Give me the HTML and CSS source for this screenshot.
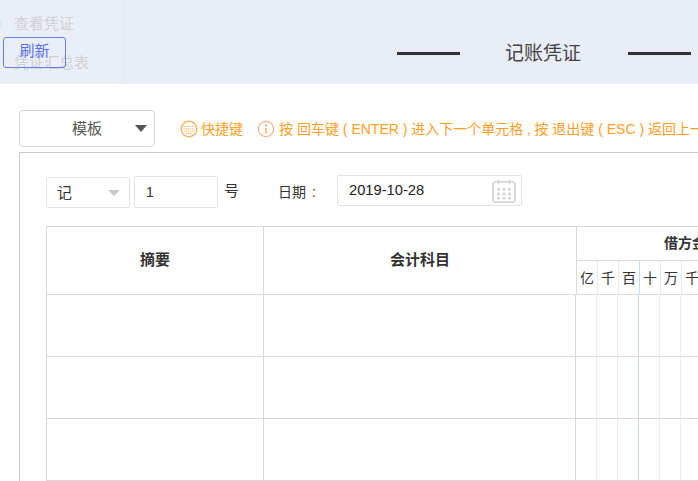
FILE: index.html
```html
<!DOCTYPE html>
<html lang="zh">
<head>
<meta charset="utf-8">
<title>记账凭证</title>
<link rel="stylesheet" href="styles.css">
</head>
<body>
<div class="page">
  <header class="top">
    <nav class="side">
      <div class="side-item">查看凭证</div>
      <div class="side-item second">凭证汇总表</div>
      <span class="dot"></span>
    </nav>
    <button class="refresh">刷新</button>
    <div class="title">
      <span class="rule"></span>
      <span class="title-text">记账凭证</span>
      <span class="rule"></span>
    </div>
  </header>

  <div class="toolbar">
    <div class="tpl"><span class="tpl-text">模板</span><span class="caret"></span></div>
    <div class="shortcut">
      <svg class="ico" width="18" height="18" viewBox="0 0 18 18"><circle cx="9" cy="9" r="7.800" fill="#fff" stroke="#fbb45a" stroke-width="1.400"/><g fill="none" stroke="#fbc27a"><path d="M3.500 6.500h11M3.500 8.800h11M3.500 11h11" stroke-dasharray="1.500 .5"/><path d="M6 13.300h6"/></g></svg>
      <span>快捷键</span>
    </div>
    <div class="hint">
      <svg class="ico" width="18" height="18" viewBox="0 0 18 18"><circle cx="9" cy="9" r="7.700" fill="none" stroke="#fcae8e" stroke-width="1.200"/><path d="M9 8v5.500" stroke="#f9a03f" stroke-width="1.300"/><circle cx="9" cy="5.500" r="1" fill="#f9a03f"/></svg>
      <span class="hint-text">按 回车键<span class="p">(</span>ENTER<span class="p">)</span>进入下一个单元格<span class="p comma">,</span>按 退出键<span class="p">(</span>ESC<span class="p">)</span>返回上一个单元格</span>
    </div>
  </div>

  <section class="panel">
    <div class="form">
      <div class="kind"><span>记</span><span class="caret light"></span></div>
      <div class="num">1</div>
      <span class="hao">号</span>
      <span class="date-label">日期<span class="p colon">:</span></span>
      <div class="date">
        <span class="date-val">2019-10-28</span>
        <svg class="cal" width="26" height="26" viewBox="0 0 26 26"><rect x="2" y="4" width="22" height="20" rx="3" fill="none" stroke="#d9d9d9" stroke-width="2"/><path d="M7.500 1.500v5M18.500 1.500v5" stroke="#d9d9d9" stroke-width="2"/><g fill="#d9d9d9"><rect x="6" y="10" width="3" height="3"/><rect x="11.500" y="10" width="3" height="3"/><rect x="17" y="10" width="3" height="3"/><rect x="6" y="14.500" width="3" height="3"/><rect x="11.500" y="14.500" width="3" height="3"/><rect x="17" y="14.500" width="3" height="3"/><rect x="6" y="19" width="3" height="2.500"/><rect x="11.500" y="19" width="3" height="2.500"/><rect x="17" y="19" width="3" height="2.500"/></g></svg>
      </div>
    </div>

    <table class="grid head">
      <colgroup>
        <col class="c-sum"><col class="c-acc-h">
        <col class="c-d"><col class="c-d"><col class="c-d"><col class="c-d"><col class="c-d"><col class="c-d"><col class="c-d"><col class="c-d"><col class="c-d"><col class="c-d"><col class="c-d">
      </colgroup>
      <thead>
        <tr class="h1">
          <th rowspan="2">摘要</th>
          <th rowspan="2">会计科目</th>
          <th colspan="11" class="debit">借方金额</th>
        </tr>
        <tr class="h2">
          <td>亿</td><td>千</td><td class="blue">百</td><td>十</td><td>万</td><td>千</td><td class="blue">百</td><td>十</td><td>元</td><td>角</td><td>分</td>
        </tr>
      </thead>
    </table>
    <table class="grid body">
      <colgroup>
        <col class="c-sum"><col class="c-acc">
        <col class="c-d"><col class="c-d"><col class="c-d"><col class="c-d"><col class="c-d"><col class="c-d">
      </colgroup>
      <tbody>
        <tr><td></td><td></td><td class="d"></td><td class="d"></td><td class="d blue"></td><td class="d"></td><td class="d"></td><td class="d"></td></tr>
        <tr><td></td><td></td><td class="d"></td><td class="d"></td><td class="d blue"></td><td class="d"></td><td class="d"></td><td class="d"></td></tr>
        <tr><td></td><td></td><td class="d"></td><td class="d"></td><td class="d blue"></td><td class="d"></td><td class="d"></td><td class="d"></td></tr>
      </tbody>
    </table>
  </section>
</div>
</body>
</html>
```

FILE: styles.css
```css
* { box-sizing: border-box; }
html, body { margin: 0; padding: 0; height: 100%; overflow: hidden; background: #fff; }
body { font-family: "Liberation Sans", "Noto Sans CJK SC", sans-serif; color: #333; line-height: 18px; }
.page { width: 698px; height: 481px; overflow: hidden; position: relative; }

.top { height: 84px; background: #e9edf7; display: flex; position: relative; }
.side { width: 124px; flex: none; position: relative; overflow: hidden; background: #e9eef7; border-right: 1px solid #e5e9f3; padding-left: 14px; padding-top: 15px; color: #cfd1d6; font-size: 15px; }
.side-item { white-space: nowrap; position: relative; }
.side-item.second { margin-top: 21px; }
.side::before, .side::after { content: ""; position: absolute; left: 0; right: 0; border-top: 1px dashed #e6eaf3; }
.side::before { top: 4px; }
.side::after { top: 43px; }
.dot { position: absolute; left: -4px; top: 21px; width: 6px; height: 6px; border: 1px solid #d8dbe2; border-radius: 50%; }
.refresh { position: absolute; left: 3px; top: 37px; width: 63px; height: 31px; padding: 0 0 3px; background: transparent; border: 1px solid #6580e0; border-radius: 3px; color: #5a6ef0; font: 15px/18px "Liberation Sans", "Noto Sans CJK SC", sans-serif; }
.title { display: flex; align-items: center; padding-left: 273px; height: 84px; padding-top: 22px; flex: none; }
.rule { width: 63px; height: 3px; background: #333; flex: none; }
.title-text { width: 168px; padding: 2px 2px 0 0; text-align: center; font-size: 19px; color: #444; }

.toolbar { display: flex; align-items: center; height: 37px; margin: 26px 0 5px 19px; white-space: nowrap; font-size: 14px; color: #ff9d1e; }
.tpl { width: 136px; height: 37px; flex: none; border: 1px solid #d6d6d6; border-radius: 4px; display: flex; align-items: center; padding-left: 52px; color: #555; font-size: 15px; }
.tpl-text { flex: 1; }
.caret { width: 0; height: 0; border-left: 6.500px solid transparent; border-right: 6.500px solid transparent; border-top: 7px solid #555; margin-right: 7px; }
.caret.light { border-left-width: 6px; border-right-width: 6px; border-top: 6px solid #c9c9c9; margin-right: 0; }
.shortcut { display: flex; align-items: center; margin-left: 25px; gap: 3px; }
.hint { display: flex; align-items: center; margin-left: 14px; gap: 4px; }
.ico { flex: none; }
.p { display: inline-block; width: 12.500px; text-align: center; }
.p.comma { width: 11px; }
.p.colon { width: 16px; }

.panel { margin-left: 19px; width: 800px; height: 340px; border: 1px solid #ccc; border-bottom: 0; padding: 23px 0 0 26px; }
.form { display: flex; align-items: center; height: 32px; font-size: 15px; color: #333; }
.kind { width: 84px; height: 31px; border: 1px solid #e3e3e3; border-radius: 2px; display: flex; align-items: center; justify-content: space-between; padding: 0 9px 0 10px; margin-top: 1px; }
.num { width: 84px; height: 32px; margin-left: 4px; border: 1px solid #e3e3e3; border-radius: 2px; display: flex; align-items: center; padding-left: 11px; font-size: 14px; }
.hao { margin: 0 0 3px 6px; }
.date-label { margin-left: 39px; width: 59px; font-size: 14px; }
.date { width: 185px; height: 31px; border: 1px solid #e3e3e3; border-radius: 2px; display: flex; align-items: center; justify-content: space-between; padding: 0 4px 0 11px; align-self: flex-start; margin-top: -1px; color: #222; font-size: 14.700px; }
.date-val { margin-bottom: 2px; }
.cal { flex: none; }

.grid { border-collapse: collapse; table-layout: fixed; border: 1px solid #d9d9d9; }
.grid.head { width: 761px; margin-top: 18px; }
.grid.body { width: 655px; margin-top: -1px; border-top: 0; }
.c-sum { width: 217px; }
.c-acc { width: 312px; }
.c-acc-h { width: 313px; }
.c-d { width: 21px; }
.grid th, .grid td { border: 1px solid #d9d9d9; padding: 0; text-align: center; font-size: 14px; }
.grid th { font-weight: bold; color: #333; }
.grid.head th[rowspan] { font-size: 15px; padding-bottom: 2px; }
.grid.head .debit { padding-bottom: 1px; }
.h1 { height: 34px; }
.h2 { height: 34px; }
.grid .h2 td { border-color: #d9d9d9 #e9e9e9; color: #333; }
.debit { white-space: nowrap; }
.grid tbody tr { height: 62px; }
.grid td.d { border-color: #d9d9d9 #eaeef2; }
.grid td.d.blue { border-right-color: #bfe0fa; }
.grid .h2 td.blue { border-right-color: #bfe0fa; }
```
